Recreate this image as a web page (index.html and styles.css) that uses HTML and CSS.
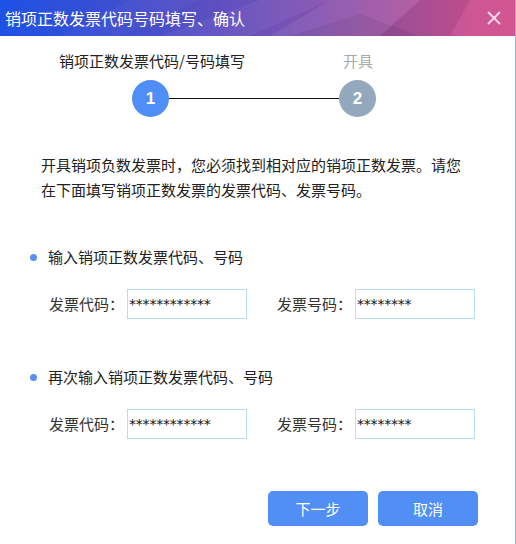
FILE: index.html
```html
<!DOCTYPE html>
<html lang="zh-CN">
<head>
<meta charset="utf-8">
<title>销项正数发票代码号码填写、确认</title>
<link rel="stylesheet" href="styles.css">
</head>
<body>
<div class="window">
  <div class="titlebar">
    <svg class="facets" width="515" height="36" viewBox="0 0 515 36" preserveAspectRatio="none">
      <polygon points="160,36 260,0 330,0 250,36" fill="rgba(255,255,255,0.05)"/>
      <polygon points="270,36 330,0 420,0 380,36" fill="rgba(255,255,255,0.07)"/>
      <polygon points="380,36 420,0 470,0 450,36" fill="rgba(0,0,0,0.05)"/>
      <polygon points="290,36 360,14 420,36" fill="rgba(0,0,0,0.06)"/>
      <polygon points="450,36 470,0 515,0 515,36" fill="rgba(255,255,255,0.04)"/>
      <polygon points="60,36 130,0 200,0 120,36" fill="rgba(255,255,255,0.03)"/>
    </svg>
    <span class="title">销项正数发票代码号码填写、确认</span>
    <svg class="close" width="14" height="14" viewBox="0 0 14 14">
      <path d="M1 1 L13 13 M13 1 L1 13" stroke="rgba(255,235,245,0.85)" stroke-width="2" fill="none"/>
    </svg>
  </div>

  <div class="content">
    <div class="steps">
      <div class="step-labels">
        <span class="label active">销项正数发票代码/号码填写</span>
        <span class="label pending">开具</span>
      </div>
      <div class="step-track">
        <span class="circle active">1</span>
        <span class="track-line"></span>
        <span class="circle pending">2</span>
      </div>
    </div>

    <p class="intro">开具销项负数发票时，您必须找到相对应的销项正数发票。请您<br>在下面填写销项正数发票的发票代码、发票号码。</p>

    <div class="section first">
      <div class="section-head"><span class="dot"></span>输入销项正数发票代码、号码</div>
      <div class="row">
        <span class="field-label">发票代码：</span>
        <div class="input">************</div>
        <span class="field-label second">发票号码：</span>
        <div class="input">********</div>
      </div>
    </div>

    <div class="section">
      <div class="section-head"><span class="dot"></span>再次输入销项正数发票代码、号码</div>
      <div class="row">
        <span class="field-label">发票代码：</span>
        <div class="input">************</div>
        <span class="field-label second">发票号码：</span>
        <div class="input">********</div>
      </div>
    </div>

    <div class="buttons">
      <button class="btn">下一步</button>
      <button class="btn">取消</button>
    </div>
  </div>
</div>
</body>
</html>
```

FILE: styles.css
```css
html, body {
  margin: 0;
  padding: 0;
  background: #ffffff;
}
body {
  font-family: "Noto Sans CJK SC", "Noto Sans", sans-serif;
  color: #222222;
}
.window {
  width: 515px;
  height: 544px;
  border-right: 1px solid #a3aadb;
  background: #ffffff;
}
.titlebar {
  position: relative;
  height: 36px;
  display: flex;
  align-items: center;
  justify-content: space-between;
  padding: 0 14px 0 5px;
  background: linear-gradient(90deg, #1d52e6 0%, #3a4ed2 20%, #5a4fc2 40%, #7f52b2 60%, #a8539f 78%, #cb5190 92%, #d24f8c 100%);
  overflow: hidden;
}
.facets {
  position: absolute;
  left: 0;
  top: 0;
}
.title {
  position: relative;
  font-size: 16px;
  line-height: 20px;
  color: #ffffff;
}
.close {
  position: relative;
}
.content {
  display: flex;
  flex-direction: column;
}
.steps {
  margin-top: 15px;
}
.step-labels {
  display: flex;
  padding-left: 52px;
  height: 20px;
}
.label {
  font-size: 15px;
  line-height: 20px;
  text-align: center;
}
.label.active {
  width: 200px;
  color: #222222;
}
.label.pending {
  width: 40px;
  margin-left: 86px;
  color: #a8a8a8;
}
.step-track {
  display: flex;
  align-items: center;
  padding-left: 132px;
  margin-top: 9px;
}
.circle {
  width: 37px;
  height: 37px;
  border-radius: 50%;
  display: flex;
  align-items: center;
  justify-content: center;
  color: #ffffff;
  font-family: "Liberation Sans", Arial, sans-serif;
  font-weight: bold;
  font-size: 17px;
}
.circle.active {
  background: #4f8ef7;
}
.circle.pending {
  background: #93a8bd;
}
.track-line {
  width: 170px;
  height: 1px;
  background: #111111;
}
.intro {
  margin: 35px 0 0 41px;
  font-size: 15px;
  line-height: 25px;
  color: #222222;
}
.section {
  margin-top: 48px;
  padding-left: 30px;
}
.section.first {
  margin-top: 45px;
}
.section-head {
  display: flex;
  align-items: center;
  font-size: 15px;
  line-height: 20px;
  color: #222222;
}
.dot {
  width: 7px;
  height: 7px;
  border-radius: 50%;
  background: #5a8ff4;
  margin-right: 11px;
}
.row {
  display: flex;
  align-items: center;
  margin-top: 22px;
  padding-left: 19px;
}
.field-label {
  font-size: 15px;
  line-height: 20px;
  color: #333333;
  width: 78px;
}
.field-label.second {
  margin-left: 30px;
}
.input {
  box-sizing: border-box;
  width: 120px;
  height: 30px;
  border: 1px solid #b7dcf5;
  padding: 4px 0 0 1px;
  font-family: "DejaVu Sans", sans-serif;
  font-size: 14px;
  letter-spacing: -0.2px;
  line-height: 20px;
  color: #111111;
}
.buttons {
  display: flex;
  justify-content: flex-end;
  gap: 10px;
  margin-top: 52px;
  padding-right: 37px;
}
.btn {
  width: 100px;
  height: 35px;
  border: none;
  border-radius: 5px;
  background: #518ef5;
  color: #ffffff;
  font-family: "Noto Sans CJK SC", sans-serif;
  font-size: 15px;
  padding: 0;
}
```
